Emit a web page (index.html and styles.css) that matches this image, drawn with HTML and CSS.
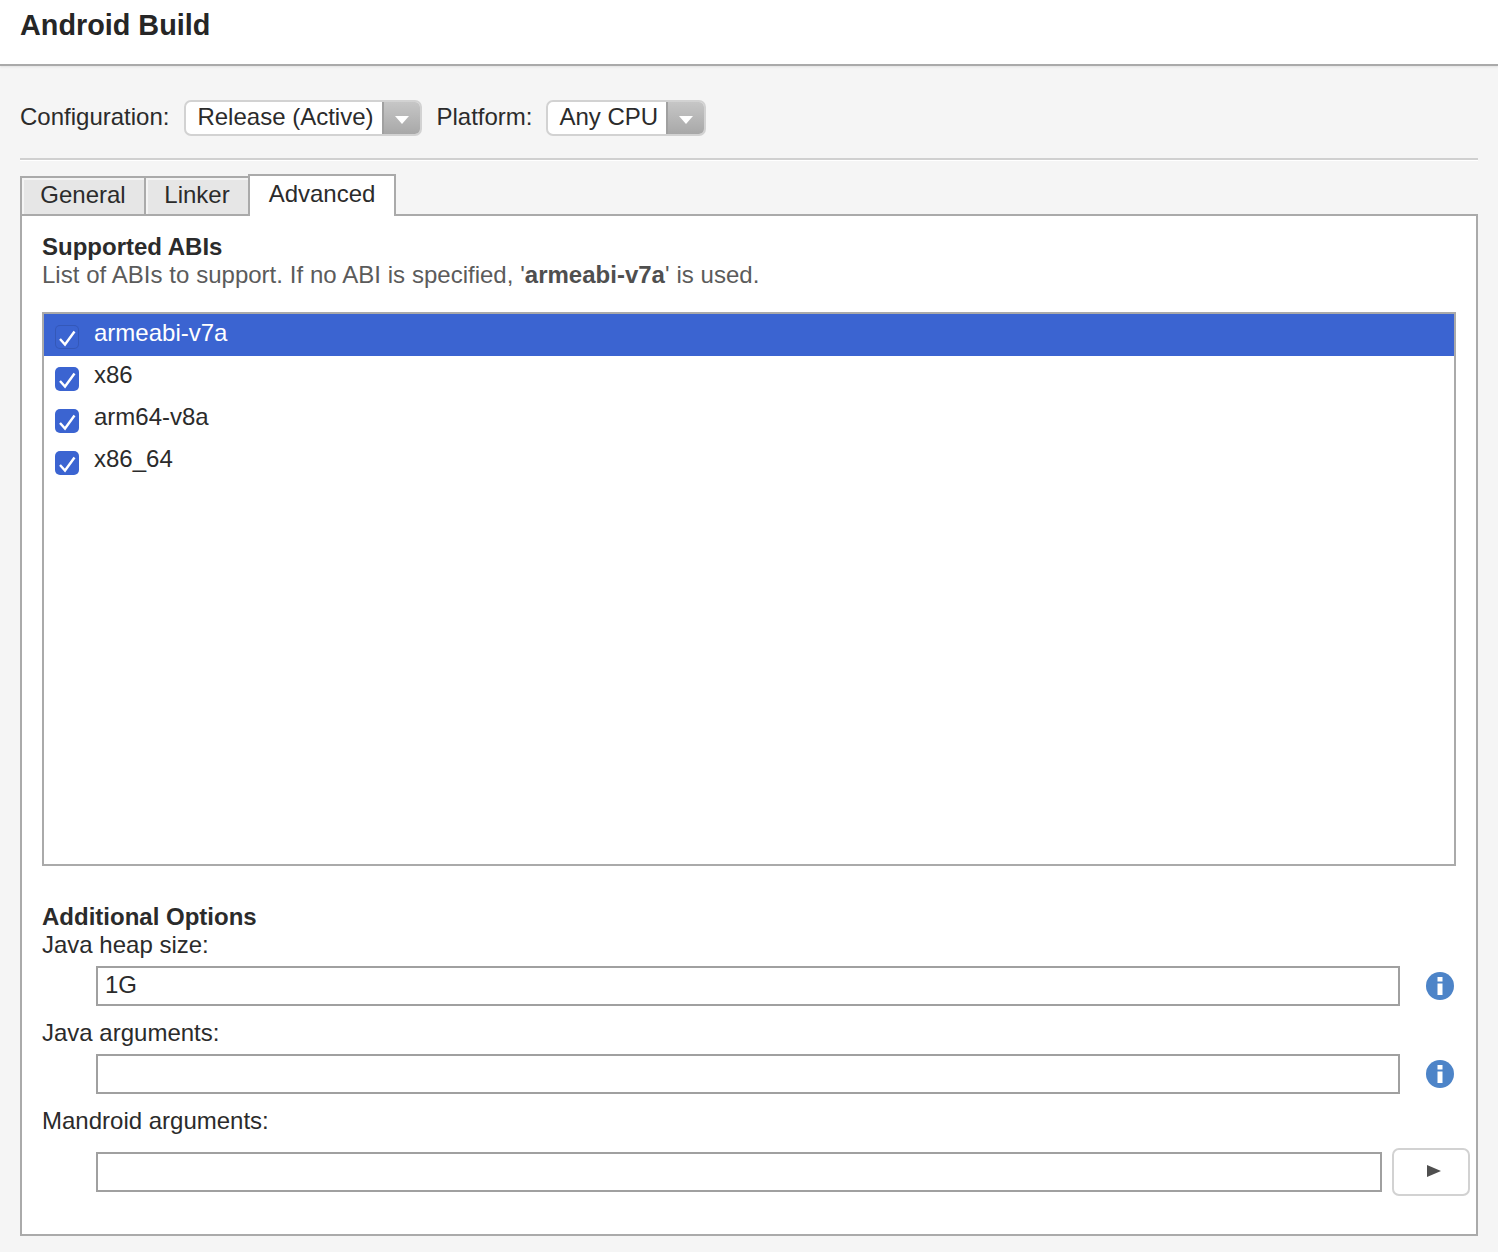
FILE: index.html
```html
<!DOCTYPE html>
<html lang="en">
<head>
<meta charset="utf-8">
<title>Android Build</title>
<link rel="stylesheet" href="styles.css">
</head>
<body>
<header class="header"><h1 class="title">Android Build</h1></header>
<main class="content">
  <div class="toolbar">
    <span class="label">Configuration:</span>
    <div class="select select-config"><span class="select-text">Release (Active)</span><span class="select-btn"><svg class="caret" viewBox="0 0 14 8"><path d="M0 0H14L7 8Z"/></svg></span></div>
    <span class="label label-platform">Platform:</span>
    <div class="select select-platform"><span class="select-text">Any CPU</span><span class="select-btn"><svg class="caret" viewBox="0 0 14 8"><path d="M0 0H14L7 8Z"/></svg></span></div>
  </div>
  <div class="separator"></div>
  <div class="tabs">
    <div class="tab tab-general">General</div>
    <div class="tab tab-linker">Linker</div>
    <div class="tab tab-active">Advanced</div>
  </div>
  <section class="panel">
    <h2 class="section-title">Supported ABIs</h2>
    <p class="section-desc">List of ABIs to support. If no ABI is specified, '<b>armeabi-v7a</b>' is used.</p>
    <div class="list">
      <div class="row row-selected"><span class="check check-selected"><svg viewBox="0 0 24 24"><path d="M5 14L10 19.5L19.5 6.5"/></svg></span><span>armeabi-v7a</span></div>
      <div class="row"><span class="check"><svg viewBox="0 0 24 24"><path d="M5 14L10 19.5L19.5 6.5"/></svg></span><span>x86</span></div>
      <div class="row"><span class="check"><svg viewBox="0 0 24 24"><path d="M5 14L10 19.5L19.5 6.5"/></svg></span><span>arm64-v8a</span></div>
      <div class="row"><span class="check"><svg viewBox="0 0 24 24"><path d="M5 14L10 19.5L19.5 6.5"/></svg></span><span>x86_64</span></div>
    </div>
    <h2 class="section-title options-title">Additional Options</h2>
    <div class="field-label">Java heap size:</div>
    <div class="field-row">
      <div class="input">1G</div>
      <svg class="info" viewBox="0 0 28 28"><circle cx="14" cy="14" r="14"/><rect x="11.5" y="5" width="5" height="4.5"/><rect x="11.5" y="11.5" width="5" height="11.5"/></svg>
    </div>
    <div class="field-label">Java arguments:</div>
    <div class="field-row">
      <div class="input"></div>
      <svg class="info" viewBox="0 0 28 28"><circle cx="14" cy="14" r="14"/><rect x="11.5" y="5" width="5" height="4.5"/><rect x="11.5" y="11.5" width="5" height="11.5"/></svg>
    </div>
    <div class="field-label">Mandroid arguments:</div>
    <div class="field-row field-row-last">
      <div class="input"></div>
      <div class="run-btn"><svg viewBox="0 0 14 12"><path d="M0 0L14 6L0 12Z"/></svg></div>
    </div>
  </section>
</main>
</body>
</html>
```
FILE: styles.css
```css
* { box-sizing: border-box; }
html, body { margin: 0; padding: 0; }
body {
  width: 1498px;
  height: 1252px;
  overflow: hidden;
  background: #f5f5f5;
  color: #2b2b2b;
  font-family: "Liberation Sans", Arial, sans-serif;
  font-size: 24px;
  line-height: 28px;
}
.header {
  height: 66px;
  background: #fff;
  border-bottom: 2px solid #aaa;
  box-shadow: 0 1px 2px #e2e2e2;
  padding: 9px 20px 0;
}
.title { margin: 0; font-size: 28.8px; line-height: 32px; font-weight: 700; color: #262626; }
.content { padding: 34px 20px 0; }
.toolbar { display: flex; align-items: center; height: 36px; }
.label { line-height: 34px; margin-top: -2px; }
.label-platform { margin-left: 14px; }
.select {
  display: flex;
  height: 36px;
  margin-left: 15px;
  background: #fff;
  border: 2px solid #d2d2d2;
  border-radius: 7px;
  overflow: hidden;
}
.select-platform { margin-left: 14px; }
.select-config { width: 238px; }
.select-platform { width: 160px; }
.select-text { flex: 1; padding-left: 12px; margin-left: -1px; line-height: 30px; white-space: nowrap; }
.select-btn {
  width: 40px;
  margin: -2px -2px -2px 0;
  display: flex;
  align-items: center;
  justify-content: center;
  background: linear-gradient(#c8c8c8, #a6a6a6);
  border-left: 2px solid #a0a0a0;
  padding: 3px 3px 0 0;
}
.caret { width: 14px; height: 8px; fill: #fff; }
.separator { height: 2px; margin-top: 22px; background: #d0d0d0; box-shadow: 0 1px 0 #fff; }
.tabs { display: flex; align-items: flex-end; height: 42px; margin-top: 14px; position: relative; z-index: 1; margin-bottom: -2px; }
.tab {
  height: 40px;
  background: #e6e6e6;
  border: 2px solid #aaa;
  border-right-width: 0;
  box-shadow: inset 2px 2px 0 #f4f4f4;
  text-align: center;
  line-height: 34px;
}
.tab-general { width: 124px; }
.tab-linker { width: 104px; }
.tab-active {
  width: 148px;
  height: 42px;
  background: #fff;
  border-right-width: 2px;
  border-bottom: 0;
  box-shadow: none;
  line-height: 36px;
  color: #2b2b2b;
}
.panel {
  height: 1022px;
  width: 1458px;
  background: #fff;
  border: 2px solid #aaa;
  padding: 17px 20px 0;
}
.section-title { margin: 0; font-size: 24px; line-height: 28px; font-weight: 700; color: #2b2b2b; }
.section-desc { margin: 0; color: #5b5b5b; line-height: 28px; word-spacing: 0.2px; }
.section-desc b { color: #4f4f4f; word-spacing: 0; }
.list {
  width: 1414px;
  height: 554px;
  margin-top: 23px;
  border: 2px solid #aaa;
  background: #fff;
}
.row { height: 42px; display: flex; align-items: center; padding-left: 11px; gap: 15px; }
.row > span:last-child { margin-top: -4px; }
.row-selected { background: #3b64d1; color: #fff; }
.check {
  width: 24px;
  height: 24px;
  margin-top: 4px;
  border-radius: 5px;
  background: #3b64d1;
  display: flex;
}
.check svg { width: 24px; height: 24px; fill: none; stroke: #fff; stroke-width: 2.4; }
.check-selected { box-shadow: inset 0 0 0 1px #3458b8; }
.options-title { margin-top: 37px; }
.field-label { line-height: 28px; }
.field-row { display: flex; align-items: center; padding-left: 54px; height: 40px; margin-top: 7px; margin-bottom: 13px; }
.input {
  flex: none;
  width: 1304px;
  height: 40px;
  border: 2px solid #a0a0a0;
  padding-left: 7px;
  line-height: 34px;
  background: #fff;
}
.info { flex: none; width: 28px; height: 28px; margin-left: 26px; fill: #4d84c8; }
.info rect { fill: #fff; }
.field-row-last { margin-top: 17px; }
.field-row-last .input { width: 1286px; }
.run-btn {
  width: 78px;
  height: 48px;
  margin-left: 10px;
  padding-left: 5px;
  background: #fff;
  border: 2px solid #d2d2d2;
  border-radius: 7px;
  display: flex;
  align-items: center;
  justify-content: center;
  flex: none;
}
.run-btn svg { width: 14px; height: 12px; fill: #4f4f4f; margin-top: -2px; }
```
